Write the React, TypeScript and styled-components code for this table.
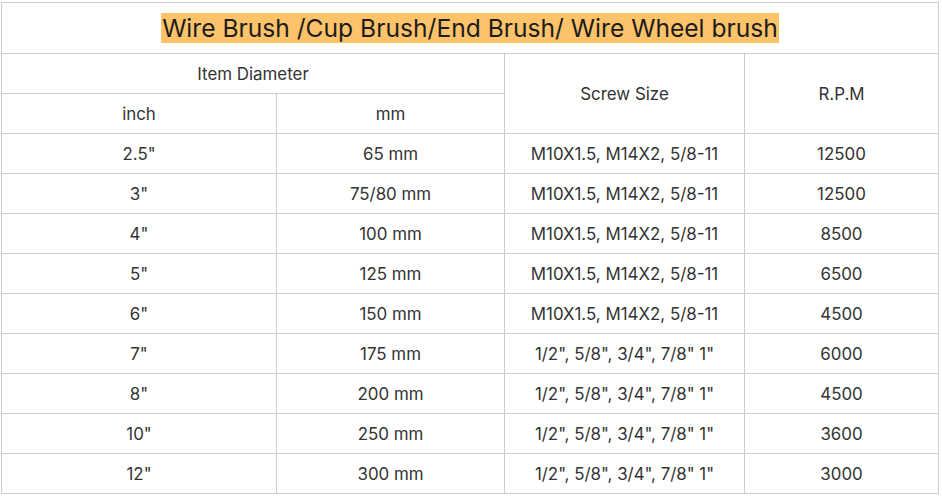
import React from 'react';
import styled, { createGlobalStyle } from 'styled-components';

const GlobalStyle = createGlobalStyle`
  html, body {
    margin: 0;
    padding: 0;
    background: #fff;
  }
  body {
    font-family: Inter, 'Noto Sans', sans-serif;
    color: #333;
  }
`;

const Page = styled.div`
  padding: 2px 4px 0 1px;
`;

const Table = styled.table`
  width: 937px;
  border-collapse: collapse;
  table-layout: fixed;
`;

const Cell = styled.td`
  border: 1px solid #ccc;
  height: 39px;
  padding: 0;
  text-align: center;
  vertical-align: middle;
  font-size: 16.9px;
  line-height: 20px;
  color: #333;
`;

const TitleCell = styled.td`
  border: 1px solid #ccc;
  height: 50px;
  padding: 0;
  text-align: center;
  vertical-align: middle;
`;

const Highlight = styled.span`
  background: #fcc36b;
  color: #1c1c1c;
  font-size: 24.6px;
  line-height: 30px;
  padding: 0 1px;
`;

const screwA = 'M10X1.5, M14X2, 5/8-11';
const screwB = '1/2", 5/8", 3/4", 7/8" 1"';

const rows = [
  ['2.5"', '65 mm', screwA, '12500'],
  ['3"', '75/80 mm', screwA, '12500'],
  ['4"', '100 mm', screwA, '8500'],
  ['5"', '125 mm', screwA, '6500'],
  ['6"', '150 mm', screwA, '4500'],
  ['7"', '175 mm', screwB, '6000'],
  ['8"', '200 mm', screwB, '4500'],
  ['10"', '250 mm', screwB, '3600'],
  ['12"', '300 mm', screwB, '3000'],
];

export default function App() {
  return (
    <Page>
      <GlobalStyle />
      <Table>
        <colgroup>
          <col style={{ width: 275 }} />
          <col style={{ width: 228 }} />
          <col style={{ width: 240 }} />
          <col style={{ width: 194 }} />
        </colgroup>
        <tbody>
          <tr>
            <TitleCell colSpan={4}>
              <Highlight>Wire Brush /Cup Brush/End Brush/ Wire Wheel brush</Highlight>
            </TitleCell>
          </tr>
          <tr>
            <Cell colSpan={2}>Item Diameter</Cell>
            <Cell rowSpan={2}>Screw Size</Cell>
            <Cell rowSpan={2}>R.P.M</Cell>
          </tr>
          <tr>
            <Cell>inch</Cell>
            <Cell>mm</Cell>
          </tr>
          {rows.map(r => (
            <tr key={r[0]}>
              {r.map((v, i) => (
                <Cell key={i}>{v}</Cell>
              ))}
            </tr>
          ))}
        </tbody>
      </Table>
    </Page>
  );
}
